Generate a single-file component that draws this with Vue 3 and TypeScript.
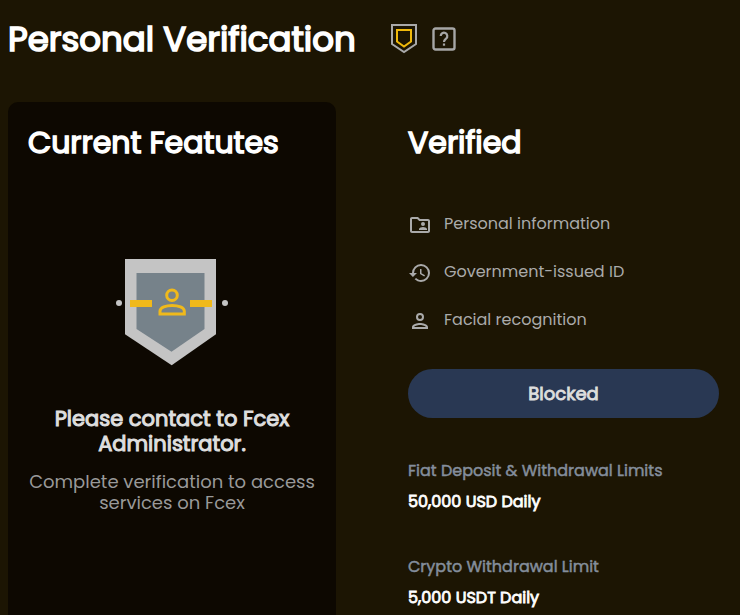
<script setup lang="ts">
interface Requirement {
  label: string
  icon: string
}

interface Limit {
  label: string
  value: string
}

const requirements: Requirement[] = [
  {
    label: 'Personal information',
    icon: 'M20 6h-8l-2-2H4C2.900 4 2 4.900 2 6v12c0 1.100.900 2 2 2h16c1.100 0 2-.900 2-2V8c0-1.100-.900-2-2-2zm0 12H4V6h5.170l2 2H20v10zM15 13a2 2 0 1 0 0-4 2 2 0 0 0 0 4zM11 17h8v-1c0-1.330-2.670-2-4-2s-4 .670-4 2v1z',
  },
  {
    label: 'Government-issued ID',
    icon: 'M13 3a9 9 0 0 0-9 9H1l3.890 3.890.070.140L9 12H6a7 7 0 1 1 7 7c-1.930 0-3.680-.790-4.940-2.060l-1.420 1.420A8.950 8.950 0 0 0 13 21a9 9 0 0 0 0-18zm-1 5v5l4.280 2.540.720-1.210-3.500-2.080V8H12z',
  },
  {
    label: 'Facial recognition',
    icon: 'M12 6a2 2 0 1 1 0 4 2 2 0 0 1 0-4m0 10c2.700 0 5.800 1.290 6 2H6c.230-.720 3.310-2 6-2m0-12a4 4 0 1 0 0 8 4 4 0 0 0 0-8zm0 10c-2.670 0-8 1.340-8 4v2h16v-2c0-2.660-5.330-4-8-4z',
  },
]

const limits: Limit[] = [
  { label: 'Fiat Deposit & Withdrawal Limits', value: '50,000 USD Daily' },
  { label: 'Crypto Withdrawal Limit', value: '5,000 USDT Daily' },
]
</script>

<template>
  <main class="page">
    <header class="page-header">
      <h1>Personal Verification</h1>
      <div class="header-icons">
        <svg class="shield" viewBox="0 0 26 30" aria-hidden="true">
          <path d="M1 1h24v19L13 28 1 20z" fill="none" stroke="#a9a9a9" stroke-width="2" />
          <path d="M6 6h14v11.500L13 22.500 6 17.500z" fill="none" stroke="#f0b90b" stroke-width="2" />
        </svg>
        <svg class="help" viewBox="0 0 24 24" aria-hidden="true">
          <rect x="1.500" y="1.500" width="21" height="21" rx="2" fill="none" stroke="#a6a6a6" stroke-width="2.400" />
          <path d="M8.700 9a3.300 3.300 0 1 1 5.500 2.500C13 12.700 12 13.200 12 15" fill="none" stroke="#a6a6a6" stroke-width="2.200" />
          <rect x="10.900" y="16.500" width="2.200" height="2.200" fill="#a6a6a6" />
        </svg>
      </div>
    </header>

    <div class="columns">
      <section class="card">
        <h2>Current Featutes</h2>
        <div class="status">
          <svg class="badge" viewBox="0 0 112 107" aria-hidden="true">
            <path d="M9 0h91v75.300L55.700 106.300 9 75.300z" fill="#c4c4c4" />
            <path d="M20.500 14h68v56L55.500 92.700 20.500 70z" fill="#76828a" />
            <path d="M14 41h22v7H14zM74 41h22v7H74z" fill="#f0b91b" />
            <circle cx="3" cy="44" r="3" fill="#c4c4c4" />
            <circle cx="109" cy="44" r="3" fill="#c4c4c4" />
            <g fill="none" stroke="#f0b91b" stroke-width="3">
              <circle cx="56" cy="36.300" r="5.300" />
              <path d="M44 55v-3c0-7.500 24.300-7.500 24.300 0v3z" />
            </g>
          </svg>
          <h3>Please contact to Fcex Administrator.</h3>
          <p>Complete verification to access services on Fcex</p>
        </div>
      </section>

      <section class="verified">
        <h2>Verified</h2>
        <ul class="requirements">
          <li v-for="item in requirements" :key="item.label">
            <svg viewBox="0 0 24 24" aria-hidden="true"><path :d="item.icon" /></svg>
            <span>{{ item.label }}</span>
          </li>
        </ul>
        <button type="button">Blocked</button>
        <dl class="limits">
          <div v-for="limit in limits" :key="limit.label">
            <dt>{{ limit.label }}</dt>
            <dd>{{ limit.value }}</dd>
          </div>
        </dl>
      </section>
    </div>
  </main>
</template>

<style>
body {
  margin: 0;
  background: #1c1503;
}
</style>

<style scoped>
.page {
  box-sizing: border-box;
  display: flex;
  flex-direction: column;
  min-height: 100vh;
  padding: 14px 0 0 8px;
  background: #1c1503;
  color: #fff;
  font-family: Poppins, Inter, "Liberation Sans", sans-serif;
}

h1,
h2,
h3,
p,
ul,
dl,
dd {
  margin: 0;
  padding: 0;
}

/* Regular letterforms thickened by an outline instead of a heavier face */
h1,
h2,
h3,
button,
dt,
dd {
  font-weight: 400;
  -webkit-text-stroke: 0.05em currentColor;
}

.page-header {
  display: flex;
  align-items: center;
  gap: 35px;
  margin-bottom: 38px;
}

h1 {
  font-size: 34px;
  line-height: 50px;
}

.header-icons {
  display: flex;
  align-items: center;
  gap: 15px;
}

.shield {
  width: 26px;
  height: 30px;
}

.help {
  width: 24px;
  height: 24px;
}

.columns {
  display: grid;
  flex: 1;
  grid-template-columns: 328fr 352fr;
  column-gap: 52px;
}

.card {
  padding: 20px;
  border-radius: 10px 10px 0 0;
  background: #0d0801;
}

h2 {
  font-size: 30px;
  line-height: 42px;
}

.status {
  display: flex;
  flex-direction: column;
  align-items: center;
  padding-top: 95px;
  text-align: center;
}

.badge {
  width: 112px;
  height: 107px;
}

h3 {
  margin-top: 40px;
  color: #dedede;
  font-size: 21px;
  line-height: 25px;
}

.status p {
  margin-top: 15px;
  color: #999;
  font-size: 18px;
  line-height: 21px;
}

.verified {
  padding: 20px 21px 0 20px;
}

.requirements {
  display: flex;
  flex-direction: column;
  gap: 22px;
  margin-top: 48px;
  list-style: none;
}

.requirements li {
  display: flex;
  align-items: center;
  gap: 12px;
  color: #aaa;
  font-size: 16px;
  line-height: 24px;
}

.requirements span {
  padding-bottom: 2px;
}

.requirements svg {
  width: 24px;
  height: 24px;
  fill: currentColor;
}

button {
  width: 100%;
  height: 49px;
  margin-top: 35px;
  border: 0;
  border-radius: 25px;
  background: #293853;
  color: #dedede;
  font-family: inherit;
  font-size: 18px;
}

.limits {
  display: flex;
  flex-direction: column;
  gap: 34px;
  margin-top: 37px;
  font-size: 16px;
}

dt,
dd {
  line-height: 31px;
}

dt {
  color: #848e9c;
  -webkit-text-stroke-width: 0.03em;
}
</style>
